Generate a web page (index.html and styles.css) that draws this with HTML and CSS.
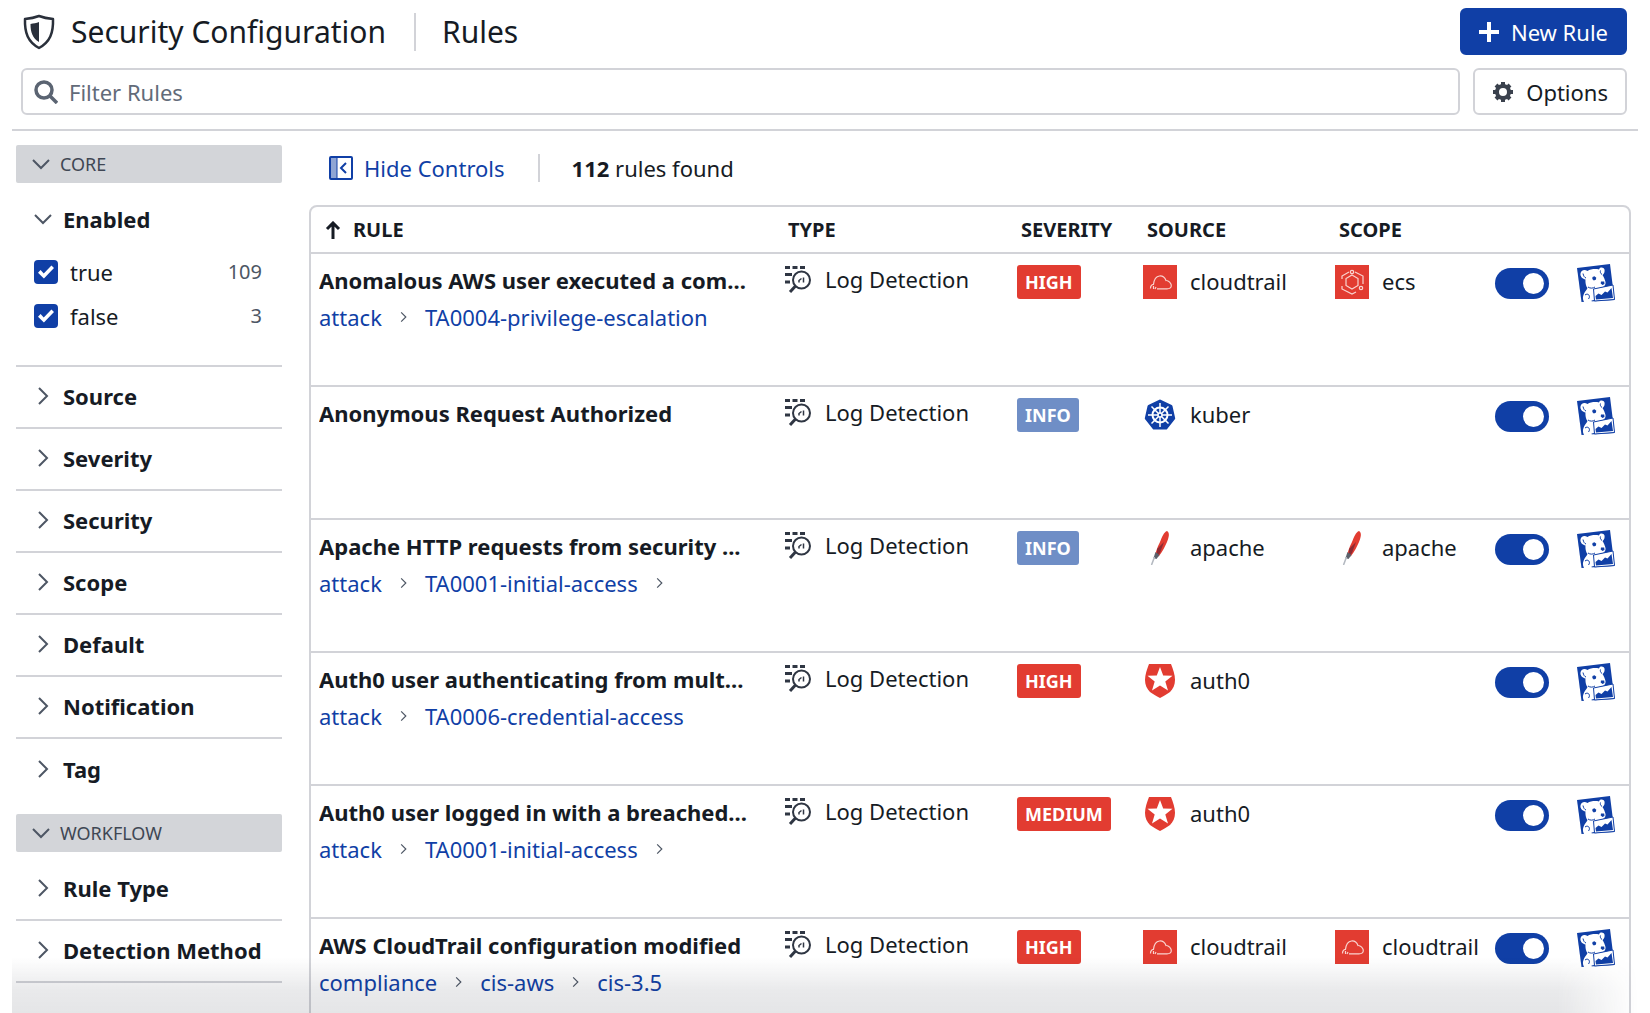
FILE: index.html
```html
<!DOCTYPE html>
<html lang="en">
<head>
<meta charset="utf-8">
<meta name="viewport" content="width=device-width, initial-scale=1">
<title>Security Configuration | Rules</title>
<link rel="stylesheet" href="styles.css">
</head>
<body>
<svg class="sprite" aria-hidden="true">
  <symbol id="chev-right" viewBox="0 0 12 20"><path d="M2 2l8 8-8 8" fill="none" stroke="currentColor" stroke-width="2"/></symbol>
  <symbol id="chev-down" viewBox="0 0 18 12"><path d="M1 2l8 8 8-8" fill="none" stroke="currentColor" stroke-width="2"/></symbol>
  <symbol id="detect" viewBox="0 0 28 28">
    <g fill="none" stroke="#2f3643">
      <path stroke-width="3" d="M1 2.500h5M8.500 2.500h5M16 2.500h5M1 9.500h7M1 17h5"/>
      <circle cx="17.500" cy="15" r="8.500" stroke-width="2"/>
      <path d="M11.500 21l-5.500 6" stroke-width="3"/>
      <path d="M15 17.500v-2l2.500-2M19.500 17.500v-5" stroke-width="1.500"/>
    </g>
  </symbol>
  <symbol id="cloudtrail" viewBox="0 0 34 34">
    <path fill="#e23c31" d="M0 0h34v34H0z"/>
    <path fill="none" stroke="#f9d4d0" stroke-width="1.200" d="M7.500 23.500c0-3 1.500-4 3-4.200.5-4.500 2.500-7.800 6-8.300 3.500-.3 5.500 2 6.500 4.500 2.500-.3 5.500 3 5.300 5.500-.3 2-2.300 2.800-4.300 2.800H14M10.500 21v3M13 22l-1 2"/>
  </symbol>
  <symbol id="ecs" viewBox="0 0 34 34">
    <path fill="#e23c31" d="M0 0h34v34H0z"/>
    <g fill="none" stroke="#f9d4d0" stroke-width="1.200">
      <path d="M17 10l6 3.500v7L17 24l-6-3.500v-7z"/>
      <path d="M14 7l-7 4v3M20 7l8 4v8M7 21v3l10 5 4-2"/>
      <circle cx="17" cy="7" r="1.700"/><circle cx="26" cy="23" r="1.700"/>
    </g>
  </symbol>
  <symbol id="kuber" viewBox="0 0 34 34">
    <path fill="#103fa6" stroke="#103fa6" stroke-width="3" stroke-linejoin="round" d="M17 3l11 5.300 2.700 12L23 30H11l-7.700-9.700L6 8.300z"/>
    <g fill="none" stroke="#fff" stroke-width="1.500">
      <circle cx="17" cy="17" r="7.500" stroke-width="2"/>
      <circle cx="17" cy="17" r="2"/>
      <path d="M17 5v10M17 19v10M5 17h10M19 17h10M8.500 8.500l7 7M18.500 18.500l7 7M25.500 8.500l-7 7M15.500 18.500l-7 7"/>
    </g>
  </symbol>
  <symbol id="apache" viewBox="0 0 34 34">
    <path fill="#e23c31" d="M24 0c3 2 2 6 0 11-2 4-4 9-8 14l-4 2c0-5 2-10 5-16 2-5 4-10 7-11z"/>
    <path fill="#8e2b33" d="M14 18l7-7-4 11-3 4z"/>
    <path fill="#5b616b" d="M12.500 21l4 3-3 4-3-1z"/>
    <path fill="none" stroke="#b3b8c0" stroke-width="1.500" d="M11.500 26l-3 8"/>
  </symbol>
  <symbol id="auth0" viewBox="0 0 34 34">
    <path fill="#e23c31" d="M6 0h22c2 5 4 11 4 16 0 5-2 9-5 12-3 2-6 4-10 6-4-2-7-4-10-6-3-3-5-7-5-12C2 11 4 5 6 0z"/>
    <path fill="#fff" d="M17 3l3.200 8.500 9.300.3-7.200 5.700 2.700 9L17 21.500l-8 5 2.700-9-7.200-5.700 9.300-.3z"/>
  </symbol>
  <symbol id="dog" viewBox="0 0 38 40">
    <path fill="#103fa6" d="M0 4L33 0l4.500 36L4.500 38z"/>
    <path fill="#fff" d="M3.500 9.500C4 6 7.500 5 10.500 7c3-2 8-2.500 11.500-1.500.5-3 5-2.500 5.500 0 .4 2.500-.5 4.500-2 5.500 1.200 2 2.500 4.500 3 7 .4 3-2 5.500-5 5.500l-4.500 2-2 10.500-2.500.5c1 2.500-1.500 4-4.500 3.500-3.500-1-5-5-3.500-9 .8-3 3-4.500 4-7-1.500-2-2.300-5-2-8.500C5.500 15 3 12.500 3.500 9.500z"/>
    <path fill="none" stroke="#103fa6" d="M6 9.500c.5 2.500 1.500 4 3 4.500M23.500 6.500c-.5 1.500 0 3 1.500 4M11 23c2 1.500 5 1.500 7 0M8 31c3-2.500 6 1 3.500 4"/>
    <path fill="#103fa6" d="M15.500 13l2-.8 1.800 1.500-.5 2-2 .7-1.500-1.500zM24 17.500h3.200l.3 2.500-2 1-1.800-1.500z"/>
    <path fill="#fff" stroke="#103fa6" d="M16.500 25L36 21l1.500 14.500L17.500 37z"/>
    <path fill="#103fa6" d="M18.500 32l3-2.500 3 1.500 3.500-3.500 2.500 1 4-4.500 1.500 10-17 1.500z"/>
  </symbol>
</svg>

<div class="app">
  <header class="top">
    <div class="title-row">
      <svg class="shield" viewBox="0 0 32 36" aria-hidden="true">
        <path fill="none" stroke="#2a303b" stroke-width="2.500" stroke-linejoin="round" d="M16 2c4 1.500 9 2.500 14 3 .5 14-3 23-14 29C5 28 1.500 19 2 5c5-.5 10-1.500 14-3z"/>
        <path fill="#2a303b" d="M16 8v20C9.500 24 7.500 18 7.500 10c3-.5 6-1 8.500-2z"/>
      </svg>
      <h1>Security Configuration</h1>
      <h2>Rules</h2>
      <button class="btn primary" type="button">
        <svg width="20" height="20" viewBox="0 0 20 20" aria-hidden="true"><path fill="#fff" d="M8 0h4v8h8v4h-8v8H8v-8H0V8h8z"/></svg>
        New Rule
      </button>
    </div>
    <div class="filter-row">
      <label class="search">
        <svg width="24" height="24" viewBox="0 0 24 24" aria-hidden="true"><g fill="none" stroke="#5b6472" stroke-width="3.500"><circle cx="10" cy="10" r="8"/><path d="M16 16l7 7"/></g></svg>
        <input type="text" placeholder="Filter Rules" aria-label="Filter Rules">
      </label>
      <button class="btn" type="button">
        <svg width="22" height="22" viewBox="0 0 22 22" aria-hidden="true"><g fill="none" stroke="#3a414d"><circle cx="11" cy="11" r="6" stroke-width="4"/><path stroke-width="4" d="M11 1v3M11 18v3M1 11h3M18 11h3M4 4l2 2M16 16l2 2M18 4l-2 2M6 16l-2 2"/></g></svg>
        Options
      </button>
    </div>
  </header>

  <div class="body">
    <aside class="side">
      <button class="group" type="button"><svg class="down"><use href="#chev-down"/></svg>CORE</button>
      <section class="open">
        <button class="facet" type="button"><svg class="down"><use href="#chev-down"/></svg>Enabled</button>
        <div class="option"><label><input type="checkbox" checked>true</label><span>109</span></div>
        <div class="option"><label><input type="checkbox" checked>false</label><span>3</span></div>
      </section>
      <button class="facet" type="button"><svg class="right"><use href="#chev-right"/></svg>Source</button>
      <button class="facet" type="button"><svg class="right"><use href="#chev-right"/></svg>Severity</button>
      <button class="facet" type="button"><svg class="right"><use href="#chev-right"/></svg>Security</button>
      <button class="facet" type="button"><svg class="right"><use href="#chev-right"/></svg>Scope</button>
      <button class="facet" type="button"><svg class="right"><use href="#chev-right"/></svg>Default</button>
      <button class="facet" type="button"><svg class="right"><use href="#chev-right"/></svg>Notification</button>
      <button class="facet last" type="button"><svg class="right"><use href="#chev-right"/></svg>Tag</button>
      <button class="group second" type="button"><svg class="down"><use href="#chev-down"/></svg>WORKFLOW</button>
      <button class="facet" type="button"><svg class="right"><use href="#chev-right"/></svg>Rule Type</button>
      <button class="facet" type="button"><svg class="right"><use href="#chev-right"/></svg>Detection Method</button>
    </aside>

    <main class="main">
      <div class="toolbar">
        <button class="hide" type="button">
          <svg width="24" height="24" viewBox="0 0 24 24" aria-hidden="true"><path fill="#8fa5d4" d="M2 2h6v20H2z"/><g fill="none" stroke="#103fa6" stroke-width="2"><rect x="1" y="1" width="22" height="22" rx="1"/><path d="M8 2v20" stroke-width="1"/><path d="M17 7l-5 5 5 5"/></g></svg>
          Hide Controls
        </button>
        <p class="found"><b>112</b> rules found</p>
      </div>
      <table class="rules">
        <colgroup><col><col class="c-type"><col class="c-sev"><col class="c-src"><col class="c-scope"><col class="c-on"><col class="c-by"></colgroup>
        <thead>
          <tr>
            <th><span class="sort"><svg width="16" height="18" viewBox="0 0 16 18" aria-hidden="true"><path fill="none" stroke="currentColor" stroke-width="3" d="M8 18V3M2 8l6-6 6 6"/></svg>RULE</span></th>
            <th>TYPE</th><th>SEVERITY</th><th>SOURCE</th><th>SCOPE</th><th></th><th></th>
          </tr>
        </thead>
        <tbody>
          <tr>
            <td><strong>Anomalous AWS user executed a com...</strong><nav><a href="#">attack</a><svg><use href="#chev-right"/></svg><a href="#">TA0004-privilege-escalation</a></nav></td>
            <td><span class="type"><svg><use href="#detect"/></svg>Log Detection</span></td>
            <td><span class="badge">HIGH</span></td>
            <td><span class="tech"><svg><use href="#cloudtrail"/></svg>cloudtrail</span></td>
            <td><span class="tech"><svg><use href="#ecs"/></svg>ecs</span></td>
            <td><input class="toggle" type="checkbox" role="switch" aria-label="Rule enabled" checked></td>
            <td><svg class="dog"><use href="#dog"/></svg></td>
          </tr>
          <tr>
            <td><strong>Anonymous Request Authorized</strong></td>
            <td><span class="type"><svg><use href="#detect"/></svg>Log Detection</span></td>
            <td><span class="badge info">INFO</span></td>
            <td><span class="tech"><svg><use href="#kuber"/></svg>kuber</span></td>
            <td></td>
            <td><input class="toggle" type="checkbox" role="switch" aria-label="Rule enabled" checked></td>
            <td><svg class="dog"><use href="#dog"/></svg></td>
          </tr>
          <tr>
            <td><strong>Apache HTTP requests from security ...</strong><nav><a href="#">attack</a><svg><use href="#chev-right"/></svg><a href="#">TA0001-initial-access</a><svg><use href="#chev-right"/></svg></nav></td>
            <td><span class="type"><svg><use href="#detect"/></svg>Log Detection</span></td>
            <td><span class="badge info">INFO</span></td>
            <td><span class="tech"><svg><use href="#apache"/></svg>apache</span></td>
            <td><span class="tech"><svg><use href="#apache"/></svg>apache</span></td>
            <td><input class="toggle" type="checkbox" role="switch" aria-label="Rule enabled" checked></td>
            <td><svg class="dog"><use href="#dog"/></svg></td>
          </tr>
          <tr>
            <td><strong>Auth0 user authenticating from mult...</strong><nav><a href="#">attack</a><svg><use href="#chev-right"/></svg><a href="#">TA0006-credential-access</a></nav></td>
            <td><span class="type"><svg><use href="#detect"/></svg>Log Detection</span></td>
            <td><span class="badge">HIGH</span></td>
            <td><span class="tech"><svg><use href="#auth0"/></svg>auth0</span></td>
            <td></td>
            <td><input class="toggle" type="checkbox" role="switch" aria-label="Rule enabled" checked></td>
            <td><svg class="dog"><use href="#dog"/></svg></td>
          </tr>
          <tr>
            <td><strong>Auth0 user logged in with a breached...</strong><nav><a href="#">attack</a><svg><use href="#chev-right"/></svg><a href="#">TA0001-initial-access</a><svg><use href="#chev-right"/></svg></nav></td>
            <td><span class="type"><svg><use href="#detect"/></svg>Log Detection</span></td>
            <td><span class="badge">MEDIUM</span></td>
            <td><span class="tech"><svg><use href="#auth0"/></svg>auth0</span></td>
            <td></td>
            <td><input class="toggle" type="checkbox" role="switch" aria-label="Rule enabled" checked></td>
            <td><svg class="dog"><use href="#dog"/></svg></td>
          </tr>
          <tr>
            <td><strong>AWS CloudTrail configuration modified</strong><nav><a href="#">compliance</a><svg><use href="#chev-right"/></svg><a href="#">cis-aws</a><svg><use href="#chev-right"/></svg><a href="#">cis-3.5</a></nav></td>
            <td><span class="type"><svg><use href="#detect"/></svg>Log Detection</span></td>
            <td><span class="badge">HIGH</span></td>
            <td><span class="tech"><svg><use href="#cloudtrail"/></svg>cloudtrail</span></td>
            <td><span class="tech"><svg><use href="#cloudtrail"/></svg>cloudtrail</span></td>
            <td><input class="toggle" type="checkbox" role="switch" aria-label="Rule enabled" checked></td>
            <td><svg class="dog"><use href="#dog"/></svg></td>
          </tr>
        </tbody>
      </table>
    </main>
  </div>
  <div class="fade"></div>
</div>
</body>
</html>
```
FILE: styles.css
```css
:root {
  --ink: #161b24;
  --muted: #4d5664;
  --line: #d2d3d8;
  --blue: #103fa6;
  --red: #e23c31;
}

* { box-sizing: border-box; }

body {
  margin: 0;
  background: #fff;
  color: var(--ink);
  font: 22px/36px "Noto Sans", "Open Sans", sans-serif;
}

h1, h2, p { margin: 0; }

button, input { font: inherit; color: inherit; }

button {
  border: 0;
  background: none;
  padding: 0;
  text-align: left;
}

a { color: var(--blue); text-decoration: none; }

svg { flex: none; }

.sprite { display: none; }

.app {
  height: 100vh;
  overflow: hidden;
  padding: 0 12px;
}

/* Header */
.top {
  border-bottom: 2px solid var(--line);
  padding: 8px 11px 14px 4px;
}

.title-row {
  display: flex;
  align-items: center;
  padding-left: 7px;
  height: 47px;
}

.shield { width: 32px; height: 36px; }

h1, h2 { font-size: 30px; font-weight: 400; line-height: 38px; }

h1 { margin: 0 28px 0 16px; }

h2 {
  border-left: 2px solid var(--line);
  padding-left: 26px;
}

.btn {
  display: flex;
  align-items: center;
  gap: 12px;
  height: 47px;
  padding: 0 17px;
  border: 2px solid var(--line);
  border-radius: 6px;
}

.btn.primary {
  margin-left: auto;
  border-color: var(--blue);
  background: var(--blue);
  color: #fff;
}

.filter-row {
  display: flex;
  gap: 13px;
  margin-top: 13px;
  padding-left: 5px;
}

.search {
  display: flex;
  flex: 1;
  align-items: center;
  gap: 11px;
  height: 47px;
  padding: 0 11px;
  border: 2px solid var(--line);
  border-radius: 6px;
}

.search input {
  flex: 1;
  border: 0;
  padding: 0;
  outline: 0;
  background: none;
}

.search input::placeholder { color: #626b79; opacity: 1; }

/* Layout */
.body {
  display: grid;
  grid-template-columns: 266px 1fr;
  gap: 27px;
  padding: 14px 7px 0 4px;
}

/* Sidebar */
.side { display: flex; flex-direction: column; }

.side svg { color: var(--muted); }

.down { width: 18px; height: 12px; }

.right { width: 12px; height: 20px; margin: 0 3px; }

.group {
  display: flex;
  align-items: center;
  gap: 10px;
  height: 38px;
  padding-left: 16px;
  border-radius: 2px;
  background: #d3d5d9;
  color: #3f4754;
  font-size: 18px;
}

.facet {
  display: flex;
  align-items: center;
  gap: 11px;
  height: 62px;
  padding: 0 0 2px 18px;
  border-bottom: 2px solid var(--line);
  font-weight: 700;
}

.facet.last { border-bottom: 0; }

.group.second { margin: 13px 0 7px; }

.open {
  border-bottom: 2px solid var(--line);
  padding: 6px 0 26px;
}

.open .facet { border: 0; }

.option {
  display: flex;
  align-items: center;
  justify-content: space-between;
  height: 44px;
  padding: 0 20px 2px 18px;
}

.option label { display: flex; align-items: center; gap: 12px; }

.option span { color: var(--muted); font-size: 20px; }

.option input {
  display: grid;
  place-content: center;
  appearance: none;
  width: 24px;
  height: 24px;
  margin: 0;
  border-radius: 4px;
  background: var(--blue);
}

.option input:checked::before {
  content: "";
  width: 16px;
  height: 14px;
  background: #fff;
  clip-path: polygon(0 55%, 16% 36%, 36% 60%, 84% 4%, 100% 22%, 37% 96%);
}

/* Results */
.toolbar {
  display: flex;
  align-items: center;
  gap: 33px;
  height: 60px;
  padding: 0 0 14px 20px;
}

.hide {
  display: flex;
  align-items: center;
  gap: 11px;
  color: var(--blue);
}

.found {
  border-left: 2px solid var(--line);
  padding-left: 32px;
  line-height: 28px;
}

.rules {
  width: 100%;
  table-layout: fixed;
  border: 2px solid var(--line);
  border-radius: 8px;
  border-spacing: 0;
}

.c-type { width: 233px; }
.c-sev { width: 126px; }
.c-src { width: 192px; }
.c-scope { width: 160px; }
.c-on { width: 82px; }
.c-by { width: 60px; }

.rules th {
  height: 47px;
  padding: 0 0 0 12px;
  border-bottom: 2px solid var(--line);
  font-size: 20px;
  line-height: 28px;
  text-align: left;
}

.sort { display: flex; align-items: center; gap: 12px; padding-left: 2px; }

.rules td {
  height: 133px;
  padding: 8px 0 0 8px;
  border-bottom: 2px solid var(--line);
  vertical-align: top;
}

.rules strong {
  display: block;
  overflow: hidden;
  text-overflow: ellipsis;
  white-space: nowrap;
}

.rules nav { display: flex; align-items: center; gap: 18px; margin-top: 1px; }

.rules nav svg { width: 7px; height: 12px; color: var(--muted); }

.type, .tech { display: flex; align-items: center; gap: 13px; white-space: nowrap; }

.type { height: 34px; }

.type svg { width: 28px; height: 28px; }

.tech svg { width: 34px; height: 34px; margin-top: 3px; }

.badge {
  display: inline-block;
  height: 34px;
  margin-top: 2px;
  padding: 0 8px;
  border-radius: 3px;
  background: var(--red);
  color: #fff;
  font-size: 18px;
  font-weight: 700;
  line-height: 34px;
}

.badge.info { background: #6f8ec6; }

.toggle {
  display: flex;
  align-items: center;
  justify-content: flex-end;
  appearance: none;
  width: 54px;
  height: 31px;
  margin: 6px 0 0;
  padding: 0 5px;
  border-radius: 16px;
  background: var(--blue);
}

.toggle::before {
  content: "";
  width: 21px;
  height: 21px;
  border-radius: 50%;
  background: #fff;
}

.dog { display: block; width: 38px; height: 40px; margin-top: 2px; }

/* Shade over the cut-off end of the list */
.fade {
  position: fixed;
  right: 12px;
  bottom: 0;
  left: 12px;
  height: 56px;
  background: linear-gradient(rgba(40, 45, 60, 0), rgba(40, 45, 60, 0.1) 60%, rgba(40, 45, 60, 0.12));
  mask-image: linear-gradient(to right, #000 calc(100% - 80px), transparent);
  pointer-events: none;
}
```
